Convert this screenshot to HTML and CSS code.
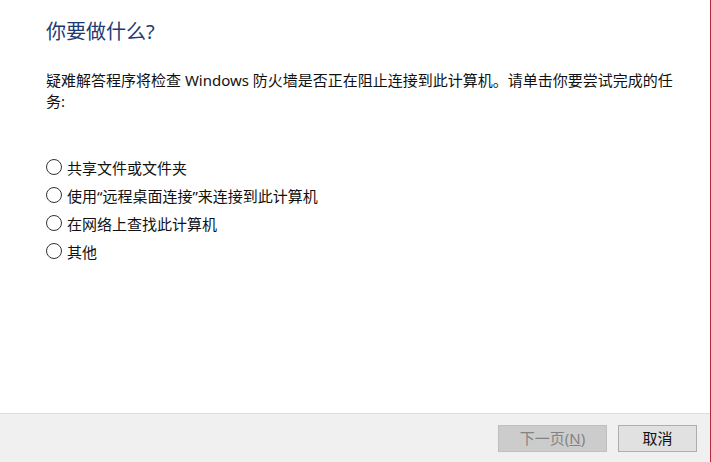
FILE: index.html
```html
<!DOCTYPE html>
<html lang="zh-CN">
  <head>
    <meta charset="UTF-8" />
    <meta name="viewport" content="width=device-width, initial-scale=1.0" />
    <title>Windows 防火墙疑难解答</title>
    <link rel="stylesheet" href="styles.css">
  </head>

  <body>
    <div class="window">
      <div class="content">
        <h2 class="title">你要做什么?</h2>
        <p class="intro">疑难解答程序将检查 Windows 防火墙是否正在阻止连接到此计算机。请单击你要尝试完成的任务:</p>

        <form class="choices">
          <label class="choice"><input type="radio" name="task" /> 共享文件或文件夹</label>
          <label class="choice"><input type="radio" name="task" /> 使用“远程桌面连接”来连接到此计算机</label>
          <label class="choice"><input type="radio" name="task" /> 在网络上查找此计算机</label>
          <label class="choice"><input type="radio" name="task" /> 其他</label>
        </form>
      </div>

      <div class="footer">
        <button class="btn" disabled>下一页(<u>N</u>)</button>
        <button class="btn">取消</button>
      </div>
    </div>
  </body>
</html>
```

FILE: styles.css
```css
body,
html {
  margin: 0;
  height: 100%;
  font-family: "Noto Sans", "Noto Sans CJK SC", sans-serif;
  background-color: white;
}

.window {
  height: 462px;
  display: flex;
  flex-direction: column;
  border-right: 1px solid #b52a3c;
  box-sizing: border-box;
}

.content {
  flex: 1;
  padding: 20px 20px 0 46px;
}

.title {
  margin: 0;
  font-size: 20px;
  font-weight: normal;
  line-height: 24px;
  color: #1d3a72;
}

.intro {
  margin: 26px 0 0 0;
  width: 640px;
  font-size: 15px;
  line-height: 21px;
  color: #111;
}

.choices {
  margin-top: 41px;
  display: flex;
  flex-direction: column;
}

.choice {
  display: flex;
  align-items: center;
  gap: 5px;
  height: 28px;
  font-size: 15px;
  color: #111;
}

.choice input {
  appearance: none;
  margin: 0;
  width: 16px;
  height: 16px;
  border: 1px solid #333;
  border-radius: 50%;
  background-color: white;
}

.footer {
  height: 49px;
  box-sizing: border-box;
  border-top: 1px solid #dcdcdc;
  background-color: #f0f0f0;
  display: flex;
  justify-content: flex-end;
  align-items: flex-start;
  gap: 11px;
  padding: 11px 13px 0 0;
}

.btn {
  height: 27px;
  min-width: 79px;
  padding: 0 19px;
  font-family: "Noto Sans", "Noto Sans CJK SC", sans-serif;
  font-size: 15px;
  line-height: 25px;
  color: #111;
  background-color: #e1e1e1;
  border: 1px solid #adadad;
}

.btn:disabled {
  width: 109px;
  color: #838383;
  background-color: #cccccc;
  border-color: #bfbfbf;
}
```
